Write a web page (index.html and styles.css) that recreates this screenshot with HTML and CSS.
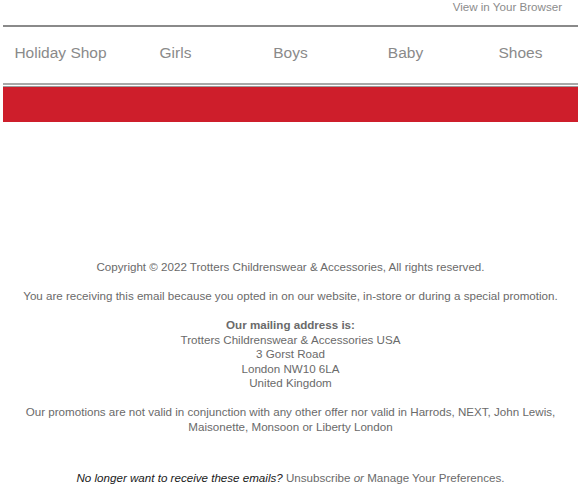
FILE: index.html
```html
<!DOCTYPE html>
<html>
<head>
<meta charset="utf-8">
<link rel="stylesheet" href="styles.css">
</head>
<body>
<div class="wrap">
  <div class="topbar"><a class="view" href="#">View in Your Browser</a></div>
  <nav class="nav">
    <a href="#">Holiday Shop</a>
    <a href="#">Girls</a>
    <a href="#">Boys</a>
    <a href="#">Baby</a>
    <a href="#">Shoes</a>
  </nav>
  <div class="banner"></div>
  <footer class="footer">
    <p>Copyright © 2022 Trotters Childrenswear &amp; Accessories, All rights reserved.</p>
    <p>You are receiving this email because you opted in on our website, in-store or during a special promotion.</p>
    <p><strong>Our mailing address is:</strong><br>Trotters Childrenswear &amp; Accessories USA<br>3 Gorst Road<br>London NW10 6LA<br>United Kingdom</p>
    <p>Our promotions are not valid in conjunction with any other offer nor valid in Harrods, NEXT, John Lewis, Maisonette, Monsoon or Liberty London</p>
    <p class="unsub"><em class="dark">No longer want to receive these emails?</em> <a href="#">Unsubscribe</a> <em>or</em> <a href="#">Manage Your Preferences</a>.</p>
  </footer>
</div>
</body>
</html>
```

FILE: styles.css
```css
html, body {
  margin: 0;
  padding: 0;
  background: #ffffff;
}
body {
  font-family: "Liberation Sans", Arial, Helvetica, sans-serif;
}
a {
  color: inherit;
  text-decoration: none;
}
.wrap {
  padding: 0 2px 0 3px;
}
.topbar {
  height: 25px;
  display: flex;
  justify-content: flex-end;
  align-items: flex-start;
  padding-right: 16px;
  border-bottom: 2px solid #8a8a8a;
  box-sizing: border-box;
  height: 27px;
}
.view {
  font-size: 11.6px;
  line-height: 14px;
  color: #8c8c8c;
}
.nav {
  display: grid;
  grid-template-columns: repeat(5, 1fr);
  padding: 17px 0 21px;
  border-bottom: 2px solid #a8a8a8;
}
.nav a {
  text-align: center;
  font-size: 15.5px;
  line-height: 18px;
  color: #8a8a8a;
}
.banner {
  margin-top: 1px;
  border-top: 1px solid #9c9c9c;
  height: 35px;
  background: #ce1e2b;
}
.footer {
  padding: 138px 18px 0;
  text-align: center;
  font-size: 11.6px;
  line-height: 14.5px;
  color: #6a6a6a;
}
.footer p {
  margin: 0 0 14.5px;
}
.footer strong {
  font-weight: bold;
}
.footer .unsub {
  margin-top: 37px;
  font-size: 11.6px;
}
.dark {
  color: #202020;
}
```
